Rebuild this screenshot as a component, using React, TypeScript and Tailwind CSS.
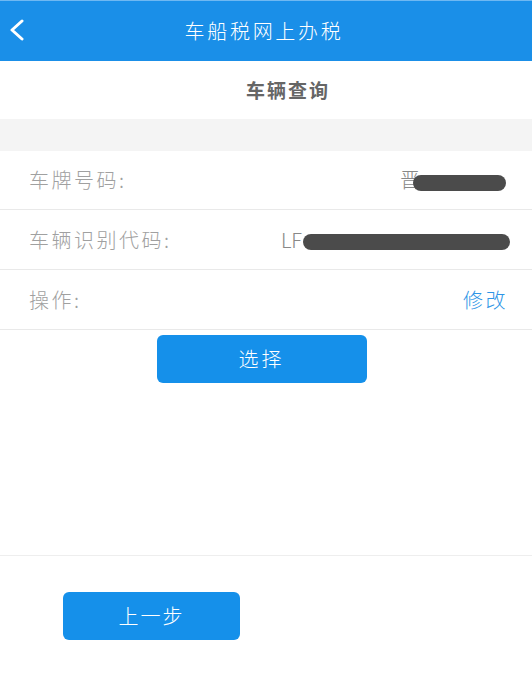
const font = { fontFamily: '"Noto Sans CJK SC", "Noto Sans", sans-serif' }

function Redacted({ w }: { w: number }) {
  return <span className="inline-block h-[16px] rounded-full bg-[#4b4b4b] align-middle" style={{ width: w }} />
}

export default function App() {
  return (
    <div className="w-[532px] h-[674px] bg-white flex flex-col font-light" style={font}>
      {/* Header */}
      <div className="h-[61px] bg-[#1a8fe8] border-t border-[#6fb8f2] flex items-center relative">
        <svg className="absolute left-[9px] top-[18px]" width="16" height="22" viewBox="0 0 16 22" fill="none">
          <polyline points="13,2 3,11 13,20" stroke="white" strokeWidth="3" strokeLinecap="round" strokeLinejoin="round" />
        </svg>
        <p className="flex-1 text-center text-white text-[20px] tracking-[2.7px] pr-[4px]">车船税网上办税</p>
      </div>

      {/* Sub title */}
      <div className="h-[58px] flex items-center justify-center pl-[44px]">
        <p className="text-[19px] font-bold text-[#666] tracking-[2px]">车辆查询</p>
      </div>

      <div className="h-[32px] bg-[#f4f4f4]" />

      {/* Rows */}
      <div className="flex flex-col text-[20px] tracking-[2.5px]">
        <div className="h-[59px] flex items-center justify-between pl-[29px] pr-[26px] border-b border-[#e9e9e9]">
          <span className="text-[#a0a0a0]">车牌号码:</span>
          <span className="text-[#888] flex items-center tracking-normal">晋<span className="-ml-[7px]"><Redacted w={93} /></span></span>
        </div>
        <div className="h-[60px] flex items-center justify-between pl-[29px] pr-[22px] border-b border-[#e9e9e9]">
          <span className="text-[#a0a0a0]">车辆识别代码:</span>
          <span className="text-[#888] flex items-center tracking-normal">LF<span className="ml-[1px]"><Redacted w={207} /></span></span>
        </div>
        <div className="h-[60px] flex items-center justify-between pl-[29px] pr-[24px] border-b border-[#e9e9e9]">
          <span className="text-[#a0a0a0]">操作:</span>
          <span className="text-[#2e95e6]">修改</span>
        </div>
      </div>

      {/* Select */}
      <div className="h-[226px] flex justify-center pt-[5px] pr-[9px] border-b border-[#eeeeee]">
        <button className="w-[210px] h-[48px] rounded-[6px] bg-[#1590ea] text-white text-[20px] tracking-[3px]">选择</button>
      </div>

      <div className="flex pl-[63px] pt-[36px]">
        <button className="w-[177px] h-[48px] rounded-[6px] bg-[#1590ea] text-white text-[20px] tracking-[2px]">上一步</button>
      </div>
    </div>
  )
}
